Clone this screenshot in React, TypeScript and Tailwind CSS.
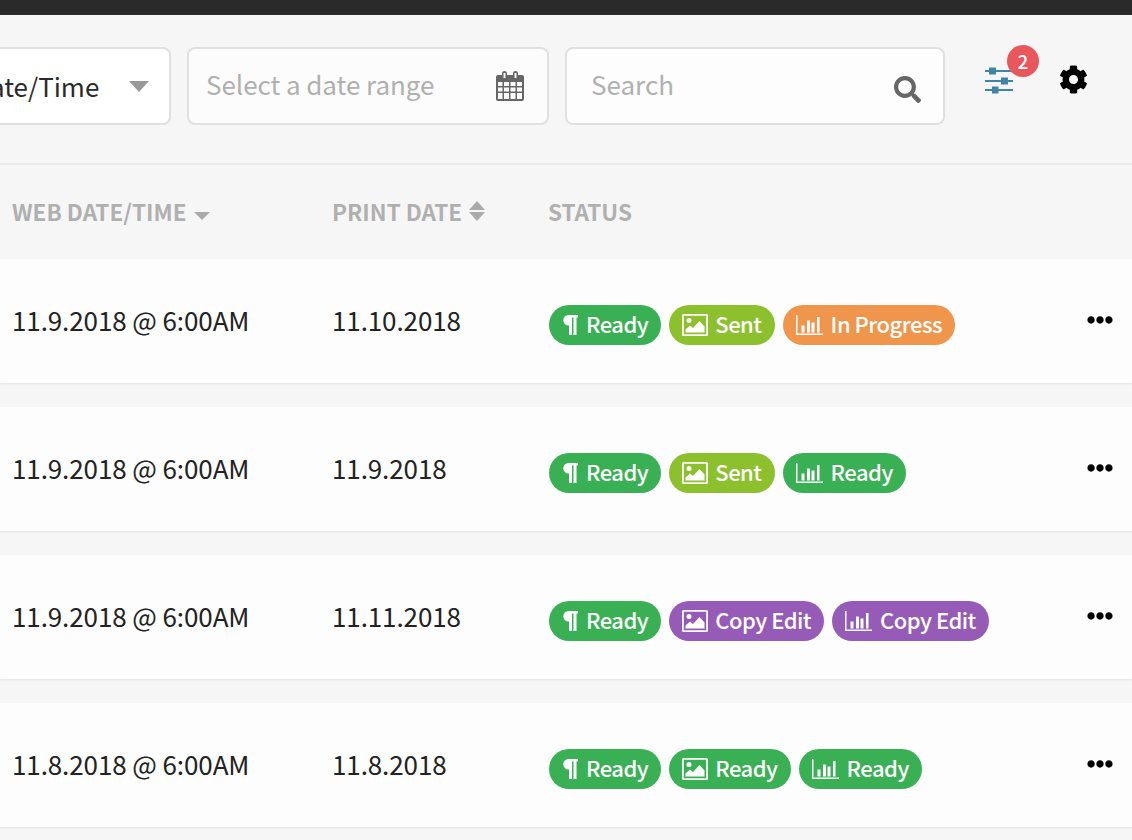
import React from 'react';
import { FaCog, FaEllipsisH, FaSearch } from 'react-icons/fa';

type Tone = 'green' | 'lime' | 'orange' | 'purple';
type Kind = 'text' | 'image' | 'chart';

interface Pill {
  kind: Kind;
  label: string;
  tone: Tone;
}

interface Row {
  web: string;
  print: string;
  pills: Pill[];
}

const toneClass: Record<Tone, string> = {
  green: 'bg-[#3ab054]',
  lime: 'bg-[#8cc12d]',
  orange: 'bg-[#f0954c]',
  purple: 'bg-[#965bb6]',
};

const rows: Row[] = [
  {
    web: '11.9.2018 @ 6:00AM',
    print: '11.10.2018',
    pills: [
      { kind: 'text', label: 'Ready', tone: 'green' },
      { kind: 'image', label: 'Sent', tone: 'lime' },
      { kind: 'chart', label: 'In Progress', tone: 'orange' },
    ],
  },
  {
    web: '11.9.2018 @ 6:00AM',
    print: '11.9.2018',
    pills: [
      { kind: 'text', label: 'Ready', tone: 'green' },
      { kind: 'image', label: 'Sent', tone: 'lime' },
      { kind: 'chart', label: 'Ready', tone: 'green' },
    ],
  },
  {
    web: '11.9.2018 @ 6:00AM',
    print: '11.11.2018',
    pills: [
      { kind: 'text', label: 'Ready', tone: 'green' },
      { kind: 'image', label: 'Copy Edit', tone: 'purple' },
      { kind: 'chart', label: 'Copy Edit', tone: 'purple' },
    ],
  },
  {
    web: '11.8.2018 @ 6:00AM',
    print: '11.8.2018',
    pills: [
      { kind: 'text', label: 'Ready', tone: 'green' },
      { kind: 'image', label: 'Ready', tone: 'green' },
      { kind: 'chart', label: 'Ready', tone: 'green' },
    ],
  },
];

const ParagraphIcon = () => (
  <svg width="16" height="20" viewBox="0 0 16 20" className="shrink-0" fill="currentColor">
    <path d="M6.500 0H16v2.500h-1.500V20H11.500V2.500H10V20H7v-9.500h-.5A5.250 5.250 0 0 1 6.500 0z" />
  </svg>
);

const ImageIcon = () => (
  <svg width="26" height="22" viewBox="0 0 26 22" className="-mr-[1px] shrink-0" fill="currentColor">
    <path
      fillRule="evenodd"
      d="M1.500 0h23A1.500 1.500 0 0 1 26 1.500v19a1.500 1.500 0 0 1-1.500 1.500h-23A1.500 1.500 0 0 1 0 20.500v-19A1.500 1.500 0 0 1 1.500 0zM1.800 1.800v18.400h22.400V1.800z"
    />
    <circle cx="7" cy="6.500" r="2.500" />
    <path d="M3.500 18.500v-3l4.500-4 3 2.500 6.500-7 5 5.500v6z" />
  </svg>
);

const ChartIcon = () => (
  <svg width="27" height="20" viewBox="0 0 27 20" className="shrink-0" fill="currentColor">
    <path d="M0 0h1.500v18.500H27V20H0z" />
    <path d="M5.500 10.500h3v7h-3zM11 5.500h3v12h-3zM15.500 7.500h3v10h-3zM21 2h2.500v15.500H21z" />
  </svg>
);

const CalendarIcon = () => (
  <svg width="28" height="30" viewBox="0 0 28 30" fill="#666">
    <path
      fillRule="evenodd"
      d="M2 4h4V2.500a2.500 2.500 0 0 1 5 0V4h6V2.500a2.500 2.500 0 0 1 5 0V4h4a2 2 0 0 1 2 2v22a2 2 0 0 1-2 2H2a2 2 0 0 1-2-2V6a2 2 0 0 1 2-2zM2 11v4h4.500v-4zM8 11v4h5v-4zM14.500 11v4h5v-4zM21 11v4h5v-4zM2 16.500v4h4.500v-4zM8 16.500v4h5v-4zM14.500 16.500v4h5v-4zM21 16.500v4h5v-4zM2 22v6h4.500v-6zM8 22v6h5v-6zM14.500 22v6h5v-6zM21 22v6h5v-6zM7.500 2v5h2V2zM18.500 2v5h2V2z"
    />
  </svg>
);

const SlidersIcon = () => (
  <svg width="28" height="27" viewBox="0 0 28 27" fill="#3f85a8">
    <path d="M0 3h28v2H0zM0 13h28v2H0zM0 22h28v2H0z" />
    <path d="M4 .500h7v7H4zM16 10.500h7v7h-7zM7 19.500h6.500v7H7z" />
  </svg>
);

const PillIcon = ({ kind }: { kind: Kind }) => {
  if (kind === 'text') return <ParagraphIcon />;
  if (kind === 'image') return <ImageIcon />;
  return <ChartIcon />;
};

const StatusPill = ({ pill }: { pill: Pill }) => (
  <span
    className={`flex h-10 items-center gap-[8px] rounded-full pl-[13px] pr-[13px] text-[22px] font-medium leading-none tracking-[-0.5px] text-white ${toneClass[pill.tone]}`}
  >
    <PillIcon kind={pill.kind} />
    <span className="relative -top-[2px]">{pill.label}</span>
  </span>
);

export default function App() {
  return (
    <div className="h-[840px] w-[1132px] overflow-hidden bg-[#f6f6f6] font-['Noto_Sans_CJK_SC',sans-serif]">
      <div className="h-[15px] bg-[#2a2a2a]" />

      <div className="flex h-[150px] items-start border-b-2 border-[#ececec] pt-[32px]">
        <div className="-ml-[60px] flex h-[78px] w-[231px] items-center justify-between rounded-lg border-2 border-[#e0e0e0] bg-white pl-[30px] pr-[20px] text-[26px] text-[#2b2b2b]">
          <span className="relative -top-[1px]">Date/Time</span>
          <span className="h-0 w-0 border-x-[10px] border-t-[11px] border-x-transparent border-t-[#999]" />
        </div>
        <div className="ml-[16px] flex h-[78px] w-[362px] items-center justify-between rounded-lg border-2 border-[#e0e0e0] bg-[#fcfcfc] pl-[17px] pr-[23px] text-[26px] tracking-[-0.05px] text-[#b0b0b0]">
          <span className="relative -top-[3px]">Select a date range</span>
          <CalendarIcon />
        </div>
        <div className="ml-[16px] flex h-[78px] w-[380px] items-center justify-between rounded-lg border-2 border-[#e0e0e0] bg-[#fdfdfd] pl-[24px] pr-[22px] text-[26px] text-[#b0b0b0]">
          <span className="relative -top-[3px]">Search</span>
          <FaSearch className="relative top-[3px] h-[27px] w-[27px] text-[#666]" />
        </div>
        <div className="relative ml-[40px] mt-[20px]">
          <SlidersIcon />
          <span className="absolute -right-[26px] -top-[22px] flex h-[32px] w-[32px] items-center justify-center rounded-full bg-[#e9565c] text-[19px] font-medium text-white">
            2
          </span>
        </div>
        <FaCog className="ml-[46px] mt-[18px] h-[29px] w-[29px] text-black" />
      </div>

      <div className="flex h-[94px] items-center pb-[2px] pl-[12px] text-[22.500px] font-bold leading-none text-[#b0b0b0]">
        <div className="flex w-[320px] items-center gap-[8px]">
          <span>WEB DATE/TIME</span>
          <span className="mt-[9px] h-0 w-0 border-x-[8px] border-t-[8px] border-x-transparent border-t-[#aaa]" />
        </div>
        <div className="flex w-[216px] items-center gap-[7px]">
          <span>PRINT DATE</span>
          <span className="flex flex-col gap-[2px]">
            <span className="h-0 w-0 border-x-[8px] border-b-[9px] border-x-transparent border-b-[#aaa]" />
            <span className="h-0 w-0 border-x-[8px] border-t-[9px] border-x-transparent border-t-[#aaa]" />
          </span>
        </div>
        <div>STATUS</div>
      </div>

      <div className="flex flex-col gap-[24px]">
        {rows.map((row, i) => (
          <div
            key={i}
            className="flex h-[124px] items-start bg-[#fdfdfd] pl-[12px] pr-[19px] pt-[46px] text-[26px] leading-none tracking-[-0.1px] text-[#222] shadow-[0_1px_2px_rgba(0,0,0,0.08)]"
          >
            <div className="flex h-[30px] w-[320px] items-center">{row.web}</div>
            <div className="flex h-[30px] w-[216px] items-center">{row.print}</div>
            <div className="ml-[1px] flex gap-[8px]">
              {row.pills.map((pill, j) => (
                <StatusPill key={j} pill={pill} />
              ))}
            </div>
            <FaEllipsisH className="ml-auto mt-[2px] h-[26px] w-[26px] text-black" />
          </div>
        ))}
      </div>
    </div>
  );
}
